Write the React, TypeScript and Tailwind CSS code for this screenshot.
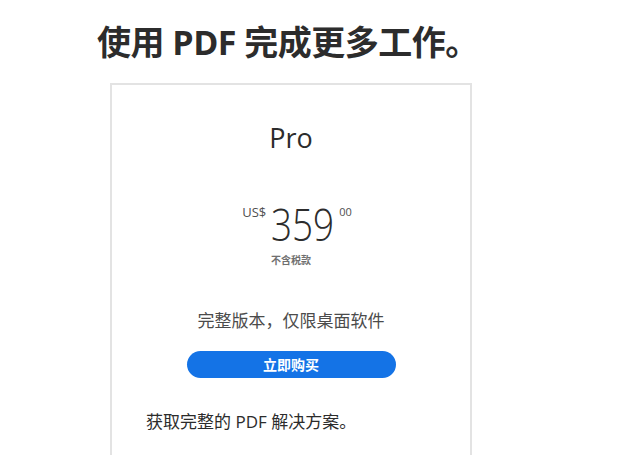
export default function App() {
  return (
    <div
      className="w-[620px] h-[455px] overflow-hidden bg-white"
      style={{ fontFamily: '"Open Sans", "Noto Sans", "Noto Sans CJK SC", sans-serif' }}
    >
      <h1 className="pl-[97px] pt-[18px] text-[34px] font-bold leading-[48px] text-[#2c2c2c] tracking-[-0.5px]">
        使用 PDF 完成更多工作。
      </h1>
      <div className="ml-[110px] mt-[17px] w-[362px] h-[400px] border-2 border-[#e3e3e3] flex flex-col">
        <div className="pt-[35px] text-center text-[27px] leading-[36px] text-[#2c2c2c]">Pro</div>
        <div className="mt-[48px] pl-[12px] flex justify-center items-start">
          <span className="text-[13px] leading-[14px] mt-[1px] mr-[5px] text-[#505050]">US$</span>
          <span className="flex justify-center w-[62px]">
            <span className="inline-block shrink-0 scale-x-[0.82] text-[45px] leading-[40px] font-light text-[#2c2c2c]">359</span>
          </span>
          <span className="text-[11px] leading-[14px] mt-[1px] ml-[6px] text-[#505050]">00</span>
        </div>
        <div className="mt-[9px] text-center text-[10px] font-bold leading-[14px] text-[#707070]">不含税款</div>
        <div className="mt-[42px] text-center text-[17px] leading-[24px] text-[#4b4b4b]">完整版本，仅限桌面软件</div>
        <div className="mt-[18px] flex justify-center">
          <button className="w-[209px] h-[27px] rounded-full bg-[#1473e6] text-white text-[14px] font-bold leading-[27px]">
            立即购买
          </button>
        </div>
        <div className="mt-[32px] pl-[34px] text-[17px] leading-[24px] text-[#2c2c2c]">获取完整的 PDF 解决方案。</div>
      </div>
    </div>
  );
}
